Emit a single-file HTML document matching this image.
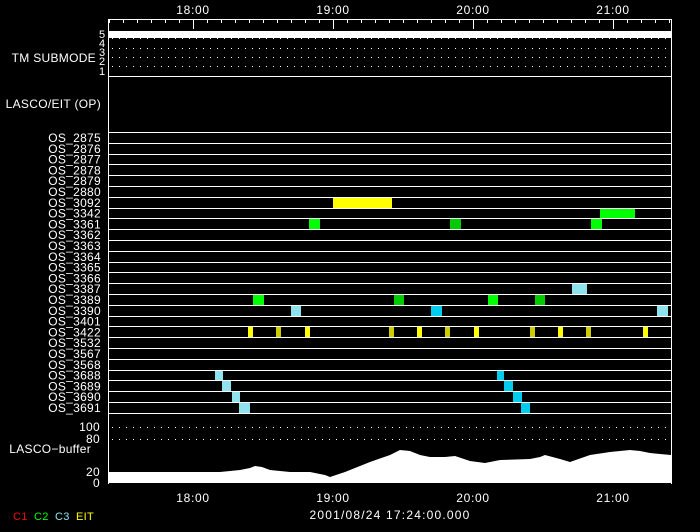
<!DOCTYPE html>
<html><head><meta charset="utf-8"><style>
html,body{margin:0;padding:0;background:#000;}
svg{display:block}
text{font-family:"Liberation Sans",sans-serif;font-size:12px;letter-spacing:0.3px;fill:#fff}
.ax{letter-spacing:0.7px}
</style></head><body>
<svg width="700" height="532" viewBox="0 0 700 532" xmlns="http://www.w3.org/2000/svg">
<rect width="700" height="532" fill="#000"/>
<text class="ax" x="193" y="14" text-anchor="middle">18:00</text>
<text class="ax" x="333" y="14" text-anchor="middle">19:00</text>
<text class="ax" x="473" y="14" text-anchor="middle">20:00</text>
<text class="ax" x="613" y="14" text-anchor="middle">21:00</text>
<g stroke="#fff" stroke-width="1">
<line x1="108.5" y1="19.5" x2="671.5" y2="19.5"/>
<line x1="108.5" y1="19" x2="108.5" y2="484"/>
<line x1="671.5" y1="19" x2="671.5" y2="484"/>
<line x1="108" y1="76.5" x2="672" y2="76.5"/>
</g>
<g id="ticks" stroke="#fff"></g>
<rect x="109" y="31" width="562" height="7" fill="#fff"/>
<g stroke="#fff" stroke-dasharray="1 6">
<line x1="112" y1="38.5" x2="671" y2="38.5"/>
<line x1="112" y1="48.5" x2="671" y2="48.5"/>
<line x1="112" y1="57.5" x2="671" y2="57.5"/>
<line x1="112" y1="66.5" x2="671" y2="66.5"/>
</g>
<text x="99" y="38" style="font-size:11px;letter-spacing:0">5</text>
<text x="99" y="47" style="font-size:11px;letter-spacing:0">4</text>
<text x="99" y="56" style="font-size:11px;letter-spacing:0">3</text>
<text x="99" y="65" style="font-size:11px;letter-spacing:0">2</text>
<text x="99" y="75" style="font-size:11px;letter-spacing:0">1</text>
<text x="96" y="62" text-anchor="end">TM SUBMODE</text>
<text x="101" y="108" text-anchor="end">LASCO/EIT (OP)</text>
<g id="rows"></g>
<g stroke="#fff" stroke-dasharray="1 6">
<line x1="112" y1="427.5" x2="671" y2="427.5"/>
<line x1="112" y1="439.5" x2="671" y2="439.5"/>
</g>
<text x="100" y="431" text-anchor="end">100</text>
<text x="100" y="443" text-anchor="end">80</text>
<text x="91" y="453" text-anchor="end">LASCO−buffer</text>
<text x="100" y="476" text-anchor="end">20</text>
<text x="100" y="487" text-anchor="end">0</text>
<polygon fill="#fff" points="109,483 109,472 220,472 240,470 250,468 255,466 262,467 270,470 290,472 310,472 325,475 330,477 345,472 370,462 390,455 400,450 410,451 420,455 430,457 445,457 455,456 470,461 485,463 500,460 530,459 540,457 545,455 560,459 570,462 590,455 610,452 630,450 640,451 650,453 660,454 671,455 671,483"/>
<text class="ax" x="193" y="502" text-anchor="middle">18:00</text>
<text class="ax" x="333" y="502" text-anchor="middle">19:00</text>
<text class="ax" x="473" y="502" text-anchor="middle">20:00</text>
<text class="ax" x="613" y="502" text-anchor="middle">21:00</text>
<text x="390" y="519" text-anchor="middle" style="letter-spacing:1.2px">2001/08/24 17:24:00.000</text>
<text x="13" y="520" style="fill:#f00;font-size:11px">C1</text>
<text x="34" y="520" style="fill:#0f0;font-size:11px">C2</text>
<text x="55" y="520" style="fill:#8ee3ef;font-size:11px">C3</text>
<text x="76" y="520" style="fill:#ff0;font-size:11px">EIT</text>
<g id="bars"></g>
<script>
var NS="http://www.w3.org/2000/svg";
function el(p,t,a,txt){var e=document.createElementNS(NS,t);for(var k in a)e.setAttribute(k,a[k]);if(txt)e.textContent=txt;document.getElementById(p).appendChild(e);}
for(var x=193-84;x<672;x+=14){if(x<109)continue;var maj=((x-193)%140===0);el("ticks","line",{x1:x+.5,y1:19,x2:x+.5,y2:maj?29:23});}
var names=["2875","2876","2877","2878","2879","2880","3092","3342","3361","3362","3363","3364","3365","3366","3387","3389","3390","3401","3422","3532","3567","3568","3688","3689","3690","3691"];
for(var i=0;i<=26;i++){var y=Math.round(132+i*10.8)+.5;el("rows","line",{x1:109,y1:y,x2:671,y2:y,stroke:"#fff"});}
names.forEach(function(n,i){var y=132+i*10.8+10;el("rows","text",{x:101,y:y,"text-anchor":"end"},"OS_"+n);});
var LC="#8ee3ef",DC="#00ccee",G="#00ff00",DG="#00cc00",Y="#ffff00",O="#cccc00";
var b=[[6,333,392,Y],[7,600,635,G],[8,309,320,G],[8,450,461,DG],[8,591,602,G],[14,572,587,LC],
[15,253,264,G],[15,394,404,DG],[15,488,498,G],[15,535,545,DG],[16,291,301,LC],[16,431,442,DC],[16,657,668,LC],
[22,215,223,LC],[23,222,231,LC],[24,232,240,LC],[25,239,250,LC],[22,497,504,DC],[23,504,513,DC],[24,513,522,DC],[25,521,530,DC]];
[248,305,417,474,558,643].forEach(function(x){b.push([18,x,x+5,Y]);});
[276,389,445,530,586].forEach(function(x){b.push([18,x,x+5,O]);});
b.forEach(function(r){var y0=Math.round(132+r[0]*10.8)+1,y1=Math.round(132+(r[0]+1)*10.8);el("bars","rect",{x:r[1],y:y0,width:r[2]-r[1],height:y1-y0,fill:r[3]});});
</script>
</svg>
</body></html>
